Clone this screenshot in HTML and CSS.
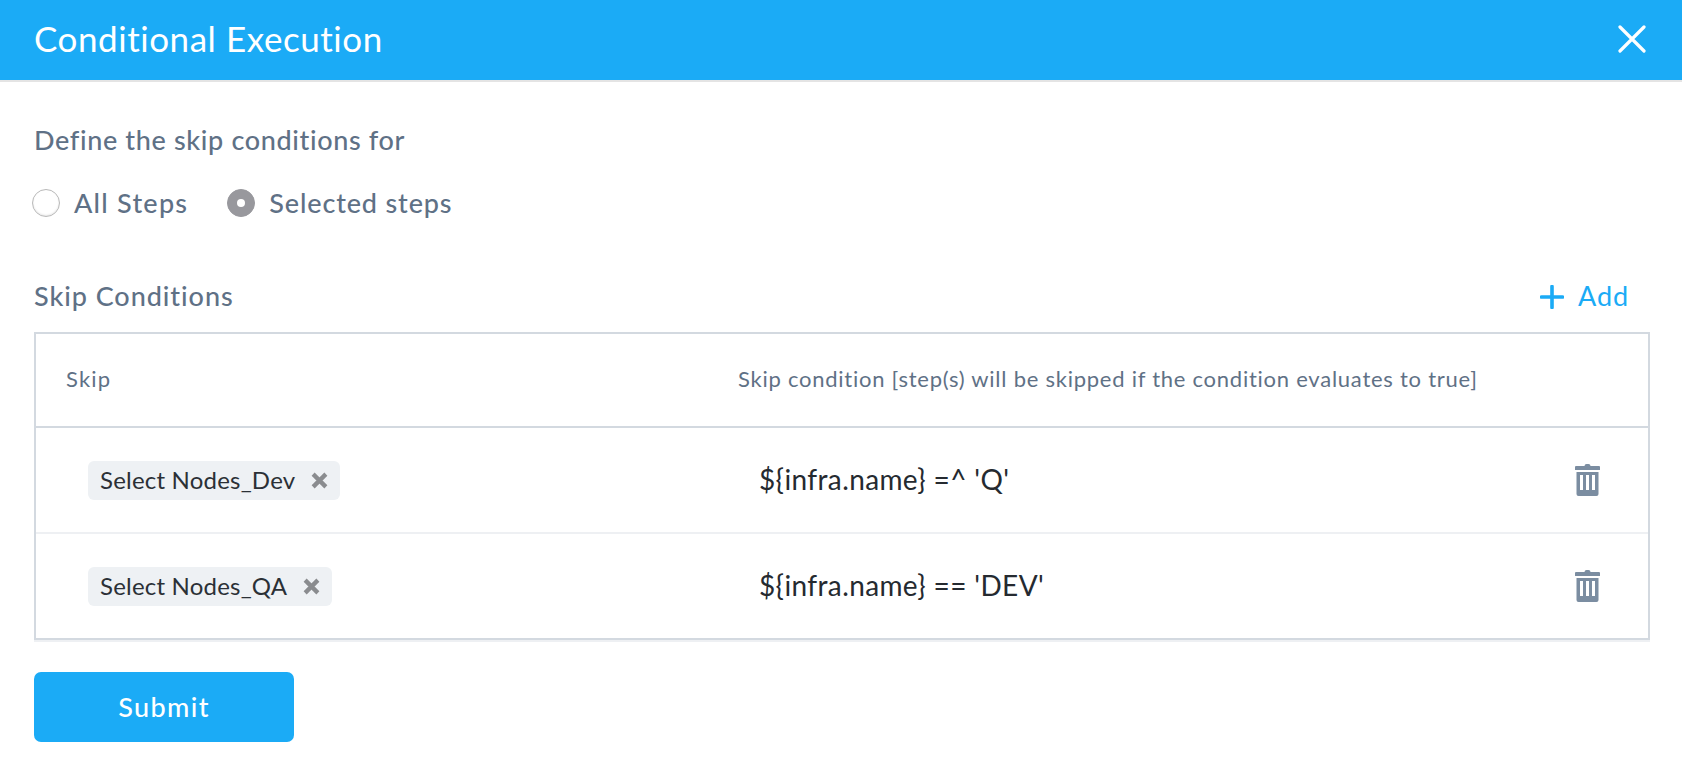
FILE: index.html
```html
<!DOCTYPE html>
<html lang="en">
<head>
<meta charset="utf-8">
<title>Conditional Execution</title>
<link rel="stylesheet" href="styles.css">
</head>
<body>
<header class="modal-header">
  <h1 class="modal-title">Conditional Execution</h1>
  <svg class="close-icon" viewBox="0 0 28 28" aria-label="Close"><path d="M2 2 L26 26 M26 2 L2 26"/></svg>
</header>
<main class="modal-body">
  <p class="field-label">Define the skip conditions for</p>
  <div class="radio-group">
    <label class="radio-item"><span class="radio"></span><span class="radio-text">All Steps</span></label>
    <label class="radio-item"><span class="radio radio-on"></span><span class="radio-text">Selected steps</span></label>
  </div>
  <div class="section-head">
    <span class="section-title">Skip Conditions</span>
    <span class="add-link">
      <svg class="plus-icon" viewBox="0 0 24 24"><path d="M1.5 12 H22.5 M12 1.5 V22.5"/></svg>
      <span class="add-text">Add</span>
    </span>
  </div>
  <div class="table">
    <div class="row row-head">
      <div class="col-skip head-skip">Skip</div>
      <div class="col-cond head-cond">Skip condition [step(s) will be skipped if the condition evaluates to true]</div>
    </div>
    <div class="row row-body row-first">
      <div class="col-skip"><span class="chip">Select Nodes_Dev<svg class="chip-x" viewBox="0 0 16 16"><path d="M2 2 L14 14 M14 2 L2 14"/></svg></span></div>
      <div class="col-cond cond-text">${infra.name} =^ 'Q'</div>
      <svg class="trash" viewBox="0 0 25 32"><path d="M9.5 2 Q9.5 0 11.5 0 H13.5 Q15.5 0 15.5 2 H24 Q25 2 25 3 V6 H0 V3 Q0 2 1 2 Z"/><path fill-rule="evenodd" d="M1.5 8 H23.5 V30 Q23.5 32 21.5 32 H3.5 Q1.5 32 1.5 30 Z M5 11 V26 H8 V11 Z M11 11 V26 H14 V11 Z M17 11 V26 H20 V11 Z"/></svg>
    </div>
    <div class="row row-body">
      <div class="col-skip"><span class="chip">Select Nodes_QA<svg class="chip-x" viewBox="0 0 16 16"><path d="M2 2 L14 14 M14 2 L2 14"/></svg></span></div>
      <div class="col-cond cond-text">${infra.name} == 'DEV'</div>
      <svg class="trash" viewBox="0 0 25 32"><path d="M9.5 2 Q9.5 0 11.5 0 H13.5 Q15.5 0 15.5 2 H24 Q25 2 25 3 V6 H0 V3 Q0 2 1 2 Z"/><path fill-rule="evenodd" d="M1.5 8 H23.5 V30 Q23.5 32 21.5 32 H3.5 Q1.5 32 1.5 30 Z M5 11 V26 H8 V11 Z M11 11 V26 H14 V11 Z M17 11 V26 H20 V11 Z"/></svg>
    </div>
  </div>
  <button class="submit" type="button">Submit</button>
</main>
</body>
</html>
```
FILE: styles.css
```css
* { box-sizing: border-box; }
html, body { margin: 0; padding: 0; background: #fff; }
body { font-family: "Lato", "Open Sans", sans-serif; font-variant-ligatures: none; color: #5f7186; height: 768px; overflow: hidden; }

.modal-header {
  height: 82px;
  background: #1babf6;
  border-bottom: 2px solid #e4e4e4;
  display: flex;
  align-items: center;
  justify-content: space-between;
  padding: 0 36px 2px 34px;
}
.modal-title { margin: 0; padding-bottom: 2px; font-size: 35px; font-weight: 400; color: #fff; letter-spacing: 0.55px; }
.close-icon { width: 28px; height: 28px; fill: none; stroke: #fff; stroke-width: 3.2; stroke-linecap: round; }

.modal-body { padding: 0 32px 0 34px; }
.field-label { margin: 0; padding-top: 43px; height: 100px; font-size: 27px; line-height: 30px; font-weight: 500; letter-spacing: 0.65px; }
.radio-group { display: flex; align-items: center; gap: 39px; height: 42px; margin-left: -2px; }
.radio-item { display: flex; align-items: center; gap: 14px; font-size: 27px; font-weight: 500; letter-spacing: 0.85px; }
.radio-item:first-child { letter-spacing: 1.25px; }
.radio-text { padding-bottom: 2px; }
.radio { width: 28px; height: 28px; border-radius: 50%; border: 1px solid #b9b9b9; box-shadow: inset 0 -1px 2px rgba(0,0,0,.1); background: #fff; display: flex; align-items: center; justify-content: center; }
.radio-on { background: #98989d; border-color: #98989d; box-shadow: none; }
.radio-on::after { content: ""; width: 8px; height: 8px; border-radius: 50%; background: #fff; }

.section-head { display: flex; align-items: center; justify-content: space-between; height: 42px; margin-top: 52px; margin-bottom: 14px; padding-right: 21px; }
.section-title { padding-bottom: 3px; font-size: 27px; font-weight: 500; letter-spacing: 0.95px; }
.add-link { display: flex; align-items: center; gap: 14px; color: #1babf6; font-size: 27px; font-weight: 400; letter-spacing: 0.9px; }
.add-text { padding-bottom: 3px; }
.plus-icon { width: 24px; height: 24px; fill: none; stroke: #1babf6; stroke-width: 3.6; stroke-linecap: round; }

.table { width: 1616px; border: 2px solid #d3d9e0; box-shadow: 0 2px 0 #eef0f3; }
.row { display: flex; align-items: center; position: relative; }
.row-head { height: 94px; padding-bottom: 4px; border-bottom: 2px solid #d3d9e0; font-size: 22px; letter-spacing: 0.75px; }
.row-body { height: 104px; }
.row-first { height: 106px; border-bottom: 2px solid #eef0f3; }
.col-skip { width: 702px; flex: none; }
.head-skip { padding-left: 30px; letter-spacing: 1.2px; }
.row-body .col-skip { padding-left: 52px; }
.col-cond { flex: 1; }
.cond-text { padding-left: 21px; padding-bottom: 2px; font-size: 28px; letter-spacing: 0.38px; color: #252a30; }

.chip { display: inline-flex; align-items: center; height: 39px; padding: 0 12px 2px; gap: 16px; border-radius: 6px; background: #eef1f4; font-size: 24px; letter-spacing: 0.2px; color: #2b3036; }
.chip-x { width: 17px; height: 17px; margin-top: 2px; fill: none; stroke: #8a8c8f; stroke-width: 4; }

.trash { width: 25px; height: 32px; flex: none; margin-right: 48px; fill: #7b8da1; }

.submit { display: block; margin-top: 32px; width: 260px; height: 70px; padding-bottom: 3px; border: 0; border-radius: 7px; background: #1babf6; color: #fff; font-family: inherit; font-size: 27px; font-weight: 500; letter-spacing: 1.4px; }
```
